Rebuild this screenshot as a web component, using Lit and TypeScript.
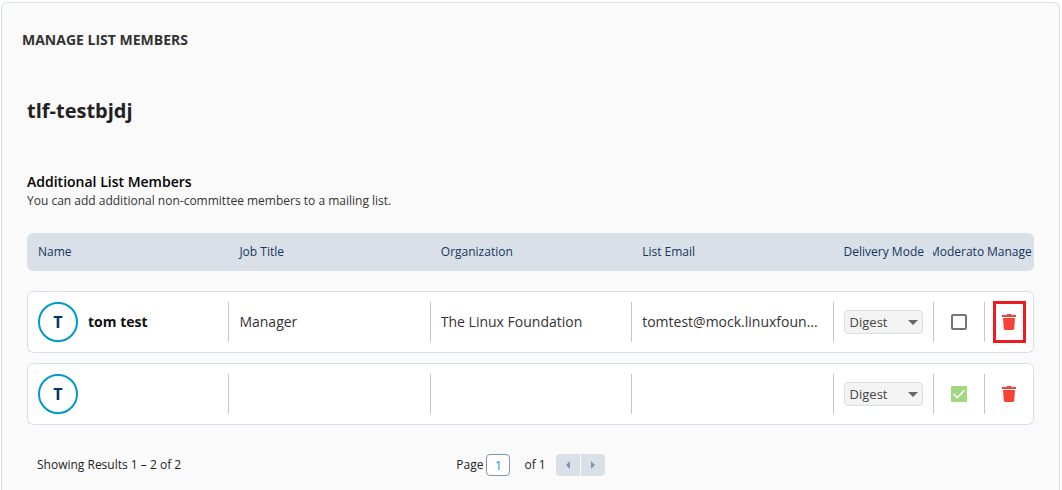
import { LitElement, html, css, svg } from "lit";
import { customElement, property } from "lit/decorators.js";

interface Member {
  initial: string;
  name: string;
  title: string;
  organization: string;
  email: string;
  moderator: boolean;
  highlighted: boolean;
}

const MEMBERS: Member[] = [
  {
    initial: "T",
    name: "tom test",
    title: "Manager",
    organization: "The Linux Foundation",
    email: "tomtest@mock.linuxfoundation.org",
    moderator: false,
    highlighted: true,
  },
  {
    initial: "T",
    name: "",
    title: "",
    organization: "",
    email: "",
    moderator: true,
    highlighted: false,
  },
];

const trashIcon = html`<svg class="trash" viewBox="0 0 14 16" aria-hidden="true">
  ${svg`<path d="M0 1h4.5l.8-1h3.4l.8 1H14v2H0zM1 4h12l-.8 10.600q-.1 1.400-1.500 1.400H3.300q-1.400 0-1.500-1.400z"></path>`}
</svg>`;

@customElement("member-table")
export class MemberTable extends LitElement {
  @property({ attribute: false }) members: Member[] = [];

  static styles = css`
    :host {
      display: block;
    }
    .table,
    .head,
    .body {
      display: block;
    }
    .row {
      display: grid;
      grid-template-columns:
        repeat(4, minmax(0, 4fr)) minmax(0, 2fr)
        repeat(2, minmax(0, 1fr));
      border-radius: 6px;
    }
    .head .row {
      height: 38px;
      align-items: center;
      background: #d9e0e8;
      color: #14365d;
      font-size: 12px;
    }
    .head-cell {
      padding: 0 11px;
      text-align: left;
      font-weight: 400;
      white-space: nowrap;
    }
    .head-cell.narrow {
      display: flex;
      justify-content: center;
      padding: 0 0 0 1px;
      overflow: hidden;
    }
    .body {
      display: grid;
      gap: 10px;
      margin-top: 20px;
    }
    .body .row {
      padding: 11px 0;
      background: #fff;
      box-shadow: inset 0 0 0 1px #d9e0ea;
    }
    .cell {
      display: flex;
      align-items: center;
      height: 40px;
      padding: 0 10px;
      border-left: 1px solid #c8c8c8;
      color: #333;
      font-size: 14px;
    }
    .cell:first-child {
      border-left-color: transparent;
      gap: 10px;
    }
    .cell.narrow {
      justify-content: center;
      padding: 0;
    }
    .clip {
      overflow: hidden;
      text-overflow: ellipsis;
      white-space: nowrap;
    }
    .avatar {
      display: grid;
      place-items: center;
      box-sizing: border-box;
      width: 40px;
      height: 40px;
      border: 2px solid #0099cc;
      border-radius: 50%;
      color: #003366;
      font-size: 16px;
      font-weight: 700;
    }
    .name {
      color: #111;
      font-weight: 700;
    }
    .mode {
      display: grid;
      flex: 1;
      align-items: center;
    }
    .mode-select {
      grid-area: 1 / 1;
      appearance: none;
      box-sizing: border-box;
      width: 100%;
      height: 24px;
      margin: 0;
      padding: 0 20px 0 5px;
      border: 1px solid #d9e0e8;
      border-radius: 4px;
      background: #f3f3f3;
      color: #444;
      font: inherit;
      font-size: 13px;
    }
    .arrow {
      grid-area: 1 / 1;
      justify-self: end;
      width: 10px;
      height: 5px;
      margin-right: 5px;
      fill: #666;
      pointer-events: none;
    }
    .check {
      display: grid;
      place-items: center;
    }
    .check-box {
      grid-area: 1 / 1;
      appearance: none;
      box-sizing: border-box;
      width: 16px;
      height: 16px;
      margin: 0;
      border: 2px solid #757575;
      border-radius: 2px;
      background: #fff;
    }
    .check-box:checked {
      border-color: #a2d884;
      border-radius: 1px;
      background: #a2d884;
    }
    .tick {
      grid-area: 1 / 1;
      width: 16px;
      height: 16px;
      fill: none;
      stroke: #fff;
      stroke-width: 1.5;
      pointer-events: none;
    }
    .remove {
      display: grid;
      place-items: center;
      width: 27px;
      height: 36px;
      padding: 0;
      border: 0;
      background: none;
    }
    .remove.highlighted {
      outline: 3px solid #ed1c24;
    }
    .trash {
      width: 14px;
      height: 16px;
      fill: #f44336;
    }
  `;

  render() {
    return html`
      <table class="table">
        <thead class="head">
          <tr class="row">
            <th class="head-cell" scope="col">Name</th>
            <th class="head-cell" scope="col">Job Title</th>
            <th class="head-cell" scope="col">Organization</th>
            <th class="head-cell" scope="col">List Email</th>
            <th class="head-cell" scope="col">Delivery Mode</th>
            <th class="head-cell narrow" scope="col">Moderator</th>
            <th class="head-cell narrow" scope="col">Manage</th>
          </tr>
        </thead>
        <tbody class="body">
          ${this.members.map(
            (m) => html`
              <tr class="row">
                <td class="cell">
                  <span class="avatar">${m.initial}</span>
                  <span class="name clip">${m.name}</span>
                </td>
                <td class="cell"><span class="clip">${m.title}</span></td>
                <td class="cell"><span class="clip">${m.organization}</span></td>
                <td class="cell"><span class="clip">${m.email}</span></td>
                <td class="cell">
                  <div class="mode">
                    <select class="mode-select" aria-label="Delivery mode">
                      <option>Digest</option>
                    </select>
                    <svg class="arrow" viewBox="0 0 10 5" aria-hidden="true">
                      <path d="M0 0h10L5 5z"></path>
                    </svg>
                  </div>
                </td>
                <td class="cell narrow">
                  <label class="check">
                    <input
                      class="check-box"
                      type="checkbox"
                      aria-label="Moderator"
                      .checked=${m.moderator}
                    />
                    ${m.moderator
                      ? html`<svg class="tick" viewBox="0 0 16 16" aria-hidden="true">
                          <path d="M2.7 8.3l3.5 3.4 7.2-7.4"></path>
                        </svg>`
                      : null}
                  </label>
                </td>
                <td class="cell narrow">
                  <button
                    class="remove ${m.highlighted ? "highlighted" : ""}"
                    type="button"
                    aria-label="Remove member"
                  >
                    ${trashIcon}
                  </button>
                </td>
              </tr>
            `
          )}
        </tbody>
      </table>
    `;
  }
}

@customElement("list-pager")
export class ListPager extends LitElement {
  static styles = css`
    :host {
      display: grid;
      grid-template-columns: 1fr auto 1fr;
      align-items: center;
      color: #222;
      font-size: 12px;
    }
    .summary {
      padding-left: 10px;
    }
    .controls {
      display: flex;
      align-items: center;
    }
    .page {
      display: flex;
      align-items: center;
      gap: 3px;
    }
    .page-input {
      box-sizing: border-box;
      width: 24px;
      height: 22px;
      padding: 0;
      border: 1px solid #8494b0;
      border-radius: 4px;
      background: #fff;
      color: #0099cc;
      font: inherit;
      text-align: center;
    }
    .total {
      margin: 0 10px 0 14px;
    }
    .steps {
      display: flex;
      gap: 1px;
    }
    .step {
      display: grid;
      place-items: center;
      width: 24px;
      height: 22px;
      padding: 0;
      border: 0;
      border-radius: 4px 0 0 4px;
      background: #d9e0e8;
    }
    .step.next {
      border-radius: 0 4px 4px 0;
    }
    .caret {
      width: 4px;
      height: 8px;
      fill: #8494ad;
    }
  `;

  render() {
    return html`
      <span class="summary">Showing Results 1 – 2 of 2</span>
      <div class="controls">
        <label class="page">Page <input class="page-input" type="text" value="1" /></label>
        <span class="total">of 1</span>
        <div class="steps">
          <button class="step" type="button" aria-label="Previous page">
            <svg class="caret" viewBox="0 0 4 8"><path d="M4 0v8L0 4z"></path></svg>
          </button>
          <button class="step next" type="button" aria-label="Next page">
            <svg class="caret" viewBox="0 0 4 8"><path d="M0 0v8l4-4z"></path></svg>
          </button>
        </div>
      </div>
    `;
  }
}

@customElement("app-root")
export class AppRoot extends LitElement {
  static styles = css`
    :host {
      display: flex;
      box-sizing: border-box;
      min-height: 100vh;
      padding: 2px 2px 0 1px;
      background: #fff;
      font-family: "Open Sans", sans-serif;
      line-height: 20px;
    }
    .panel {
      flex: 1;
      min-width: 0;
      padding: 27px 25px 12px;
      border: 1px solid #d9e0e8;
      border-bottom: 0;
      border-radius: 6px 6px 0 0;
      background: #fafafa;
    }
    .heading {
      margin: 0 -5px;
      color: #333;
      font-size: 14px;
      font-weight: 700;
    }
    .list-name {
      margin: 48px 0 0;
      color: #222;
      font-size: 20px;
      line-height: 26px;
      font-weight: 700;
    }
    .section {
      margin: 48px 0 0;
      color: #000;
      font-size: 14px;
      font-weight: 600;
    }
    .note {
      margin: 0 0 23px;
      color: #333;
      font-size: 12px;
      line-height: 18px;
    }
    .pager {
      margin-top: 29px;
    }
  `;

  render() {
    return html`
      <main class="panel">
        <h1 class="heading">MANAGE LIST MEMBERS</h1>
        <h2 class="list-name">tlf-testbjdj</h2>
        <h3 class="section">Additional List Members</h3>
        <p class="note">You can add additional non-committee members to a mailing list.</p>
        <member-table .members=${MEMBERS}></member-table>
        <list-pager class="pager"></list-pager>
      </main>
    `;
  }
}
